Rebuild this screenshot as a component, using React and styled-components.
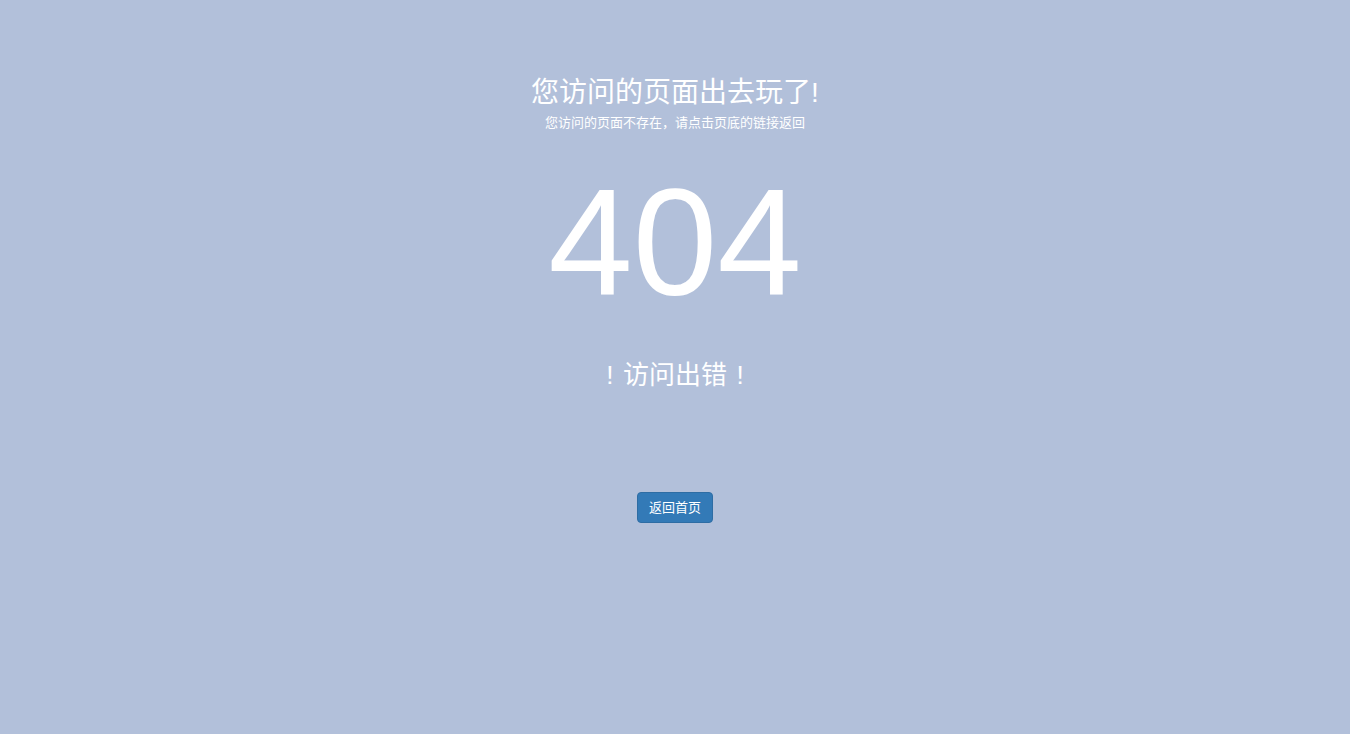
import React from "react";
import styled, { createGlobalStyle } from "styled-components";

const Global = createGlobalStyle`
  html, body { margin: 0; padding: 0; background: #b2c0da; }
  body { font-family: "Liberation Sans", "Noto Sans CJK SC", sans-serif; }
`;

const Page = styled.main`
  min-height: 734px;
  box-sizing: border-box;
  padding-top: 76px;
  display: flex;
  flex-direction: column;
  align-items: center;
  color: #fff;
  text-align: center;
`;

const Title = styled.h1`
  margin: 0;
  font-size: 28px;
  line-height: 34px;
  font-weight: 400;
`;

const Subtitle = styled.p`
  margin: 4px 0 0;
  font-size: 13px;
  line-height: 18px;
  font-weight: 400;
`;

const Code = styled.div`
  margin-top: 34px;
  font-family: "Liberation Sans", Arial, sans-serif;
  font-size: 152px;
  line-height: 152px;
  font-weight: 400;
`;

const ErrorText = styled.h2`
  margin: 40px 0 0;
  font-size: 26px;
  line-height: 34px;
  font-weight: 400;
`;

const Mark = styled.span`
  display: inline-block;
  width: 1em;
  text-align: center;
`;

const HomeButton = styled.a`
  margin-top: 100px;
  display: inline-block;
  padding: 6px 11px;
  font-size: 13px;
  line-height: 17px;
  font-weight: 400;
  color: #fff;
  background: #337ab7;
  border: 1px solid #2e6da4;
  border-radius: 4px;
  text-decoration: none;
  cursor: pointer;
`;

export default function App() {
  return (
    <>
      <Global />
      <Page>
        <Title>您访问的页面出去玩了!</Title>
        <Subtitle>您访问的页面不存在，请点击页底的链接返回</Subtitle>
        <Code>404</Code>
        <ErrorText>
          <Mark>!</Mark>访问出错<Mark>!</Mark>
        </ErrorText>
        <HomeButton href="#">返回首页</HomeButton>
      </Page>
    </>
  );
}
